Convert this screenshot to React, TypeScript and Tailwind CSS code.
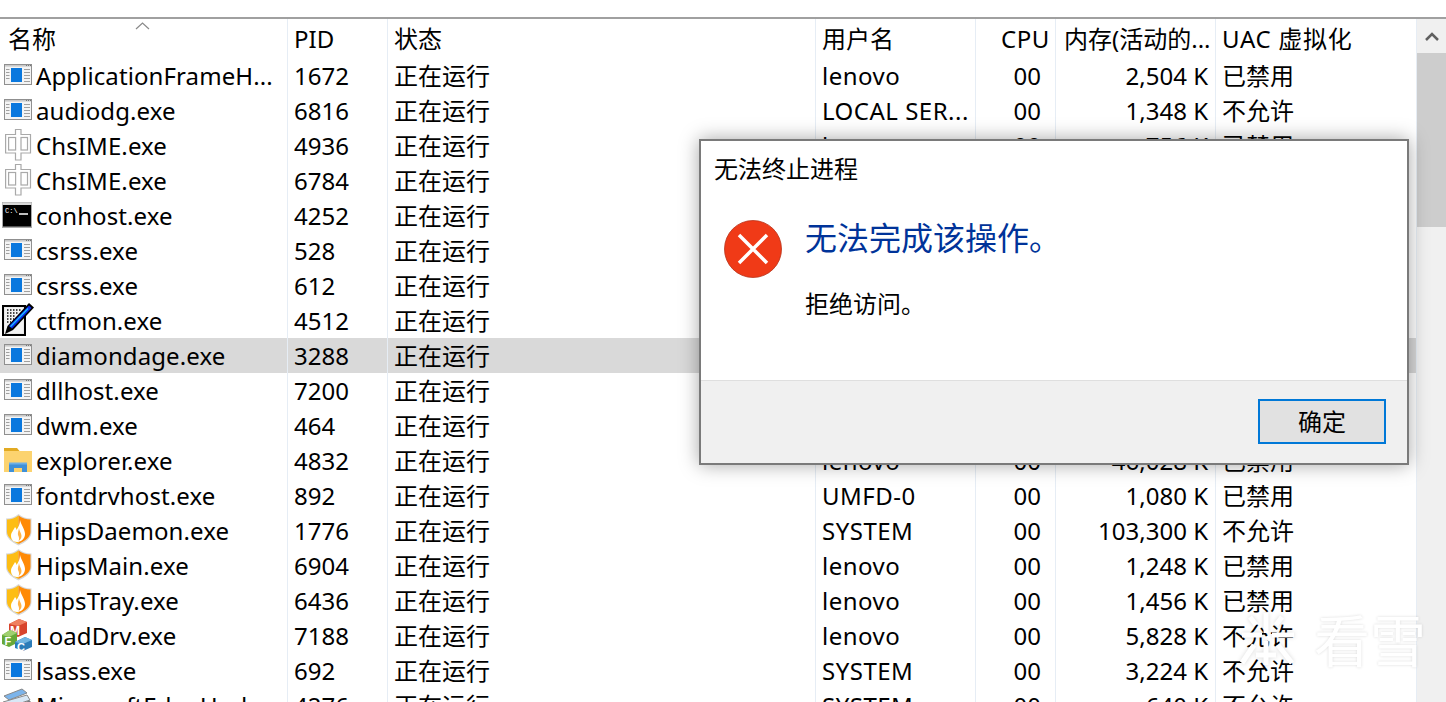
import React from 'react';

type Icon = 'app' | 'ime' | 'console' | 'pen' | 'folder' | 'shield' | 'cubes' | 'edge';

type Proc = {
  icon: Icon;
  name: string;
  pid: string;
  user: string;
  mem: string;
  uac: string;
  active?: boolean;
};

const rows: Proc[] = [
  { icon: 'app', name: 'ApplicationFrameH...', pid: '1672', user: 'lenovo', mem: '2,504 K', uac: '已禁用' },
  { icon: 'app', name: 'audiodg.exe', pid: '6816', user: 'LOCAL SER...', mem: '1,348 K', uac: '不允许' },
  { icon: 'ime', name: 'ChsIME.exe', pid: '4936', user: 'lenovo', mem: '756 K', uac: '已禁用' },
  { icon: 'ime', name: 'ChsIME.exe', pid: '6784', user: 'lenovo', mem: '748 K', uac: '已禁用' },
  { icon: 'console', name: 'conhost.exe', pid: '4252', user: 'lenovo', mem: '1,120 K', uac: '已禁用' },
  { icon: 'app', name: 'csrss.exe', pid: '528', user: 'SYSTEM', mem: '1,016 K', uac: '不允许' },
  { icon: 'app', name: 'csrss.exe', pid: '612', user: 'SYSTEM', mem: '1,204 K', uac: '不允许' },
  { icon: 'pen', name: 'ctfmon.exe', pid: '4512', user: 'lenovo', mem: '3,180 K', uac: '不允许' },
  { icon: 'app', name: 'diamondage.exe', pid: '3288', user: 'lenovo', mem: '2,260 K', uac: '已禁用', active: true },
  { icon: 'app', name: 'dllhost.exe', pid: '7200', user: 'lenovo', mem: '1,532 K', uac: '已禁用' },
  { icon: 'app', name: 'dwm.exe', pid: '464', user: 'DWM-1', mem: '24,112 K', uac: '已禁用' },
  { icon: 'folder', name: 'explorer.exe', pid: '4832', user: 'lenovo', mem: '46,028 K', uac: '已禁用' },
  { icon: 'app', name: 'fontdrvhost.exe', pid: '892', user: 'UMFD-0', mem: '1,080 K', uac: '已禁用' },
  { icon: 'shield', name: 'HipsDaemon.exe', pid: '1776', user: 'SYSTEM', mem: '103,300 K', uac: '不允许' },
  { icon: 'shield', name: 'HipsMain.exe', pid: '6904', user: 'lenovo', mem: '1,248 K', uac: '已禁用' },
  { icon: 'shield', name: 'HipsTray.exe', pid: '6436', user: 'lenovo', mem: '1,456 K', uac: '已禁用' },
  { icon: 'cubes', name: 'LoadDrv.exe', pid: '7188', user: 'lenovo', mem: '5,828 K', uac: '不允许' },
  { icon: 'app', name: 'lsass.exe', pid: '692', user: 'SYSTEM', mem: '3,224 K', uac: '不允许' },
  { icon: 'edge', name: 'MicrosoftEdgeUpda...', pid: '4276', user: 'SYSTEM', mem: '640 K', uac: '不允许' },
];

const cols = 'grid grid-cols-[288px_100px_428px_160px_80px_160px_201px]';
const line = 'border-r border-[#e6edf5]';

const RowIcon: React.FC<{ type: Icon }> = ({ type }) => {
  return (
    <svg width="36" height="35" viewBox="0 0 36 35" className="shrink-0">
      {type === 'app' && (
        <g>
          <rect x="4.500" y="6.500" width="27" height="20" fill="#f4f4f4" stroke="#8f8f8f" />
          <rect x="5" y="7" width="26" height="1.600" fill="#c9c9c9" />
          <path d="M26 7.500h1M28 7.500h1M30 7.500h1" stroke="#777" />
          <rect x="11" y="10" width="11" height="14" fill="#0a78de" />
          <path d="M6 11.500h3.500M6 14.500h3.500M6 17.500h3.500M6 20.500h3.500M24 11.500h6M24 14.500h6M24 17.500h6M24 20.500h6M24 23.500h6" stroke="#a0a0a0" />
        </g>
      )}
      {type === 'ime' && (
        <g fill="#fff" stroke="#a9a9a9" strokeWidth="1.200">
          <path d="M15.500 1.500h5.500v5h9.500v18.500H21v7h-5.500v-7H5.600V6.500h9.900z" />
          <rect x="8.600" y="9.500" width="7" height="12.500" />
          <rect x="21" y="9.500" width="6.500" height="12.500" />
        </g>
      )}
      {type === 'console' && (
        <g>
          <rect x="2" y="4" width="30" height="26" fill="#a8a8a8" />
          <rect x="2.500" y="4.500" width="29" height="2.500" fill="#d8d8d8" />
          <rect x="3" y="7" width="28" height="21.500" fill="#000" />
          <text x="5" y="15" fill="#fff" fontSize="7" fontFamily="'Liberation Mono', monospace">C:\</text>
          <path d="M19 16h9" stroke="#fff" strokeWidth="1.500" />
        </g>
      )}
      {type === 'pen' && (
        <g>
          <rect x="3" y="3" width="22" height="29" fill="#e8e8e8" stroke="#000" strokeWidth="2" />
          <rect x="5" y="5" width="18" height="25" fill="#f3f3f3" />
          <path d="M7 7h14M7 10h12M7 13h9M7 16h7M7 19h4" stroke="#111" strokeWidth="1.500" strokeDasharray="1.500 1.500" />
          <path d="M29 0l5 4.500L13 27l-8 4 2.500-8z" fill="#000" />
          <path d="M29 2.500l2.500 2.500L12 25.500l-3-2.500z" fill="#0a2ce8" />
          <path d="M27.500 5l1 1L11 24l-1-.8z" fill="#1cc4ff" />
        </g>
      )}
      {type === 'folder' && (
        <g>
          <path d="M4 5h13l3 3.500H4z" fill="#e2aa22" />
          <rect x="4" y="8" width="28" height="21" fill="#fcd36f" />
          <path d="M9 29v-8h18v8h-5v-4h-8v4z" fill="#3f90d8" />
          <path d="M9 19.500h18v2H9z" fill="#6eb0e6" />
        </g>
      )}
      {type === 'shield' && (
        <g>
          <path d="M6 5.500c5 0 9-1.500 12.500-4.500 3.500 3 8 4.500 13 4.500V19c0 6-6 10.500-13 13.500C12 29.500 6 25 6 19z" fill="#d8d8d8" />
          <path d="M7 6.500c4.500 0 8-1.500 11.500-4V31C12.500 28 7 24 7 19z" fill="#fdbd14" />
          <path d="M18.500 2.500C22 5 26 6.500 30.500 6.500V19c0 5-5.500 9-12 12z" fill="#ff8a06" />
          <path d="M20 7c1 5 5 9 5 14 0 4-3 8-8 8-4 0-6-3-6-6 0-4 3-6 4-9 1 1 1.500 2 1.500 3 2-3 3.500-6 3.500-10z" fill="#fff" />
          <path d="M19 15c0 3 2.500 5 2.500 8 0 2.500-1.500 4-3 5 1-2 .5-4-.5-6-.5-1.500.5-4 1-7z" fill="#ffb347" />
        </g>
      )}
      {type === 'cubes' && (
        <g fontFamily="'Liberation Sans', sans-serif" fontWeight="700" fill="#fff">
          <path d="M9 6l10-5 8 3v11l-9 4-9-3z" fill="#d8442c" />
          <path d="M9 6l10-5 8 3-9 4z" fill="#ef8060" />
          <text x="10" y="17" fontSize="12">M</text>
          <path d="M2 17l8-5 7 3v10l-8 4-7-3z" fill="#66a838" />
          <path d="M2 17l8-5 7 3-8 4z" fill="#a0d070" />
          <text x="4.500" y="27" fontSize="11">F</text>
          <path d="M15 24l10-5 7 3v7l-9 4-8-3z" fill="#2c7cb8" />
          <path d="M15 24l10-5 7 3-9 4z" fill="#70b4e0" />
          <text x="17" y="33" fontSize="11">C</text>
        </g>
      )}
      {type === 'edge' && (
        <g>
          <path d="M4 8l18-7 5 4-18 7z" fill="#7cb4ea" stroke="#888" />
          <path d="M3 14l24-7 3 5-24 8z" fill="#d8e8f6" stroke="#888" />
          <path d="M5 20l25-7v8L7 29z" fill="#4a90d8" stroke="#777" />
        </g>
      )}
    </svg>
  );
};

const App: React.FC = () => {
  return (
    <div lang="zh-CN" className="relative h-[702px] w-[1446px] overflow-hidden bg-white text-[24px] text-black [font-family:'Noto_Sans','Noto_Sans_CJK_SC',sans-serif]">
      <div className="h-[17px]" />
      <div className="h-[2px] bg-[#a0a0a0]" />
      <div className="flex">
        <div className="w-[1417px]">
          <div className={`${cols} relative h-[39px] leading-[39px]`}>
            <div className={`${line} pl-[8px]`}>名称</div>
            <div className={`${line} pl-[6px]`}>PID</div>
            <div className={`${line} pl-[6px]`}>状态</div>
            <div className={`${line} pl-[6px]`}>用户名</div>
            <div className={`${line} pr-[5px] text-right tracking-[0.6px]`}>CPU</div>
            <div className={`${line} pl-[8px] whitespace-nowrap`}>内存(活动的...</div>
            <div className={`${line} pl-[6px] tracking-[0.7px]`}>UAC 虚拟化</div>
            <svg width="15" height="8" viewBox="0 0 15 8" className="absolute left-[135px] top-[3px]">
              <path d="M1 7l6.500-6L14 7" fill="none" stroke="#8a8a8a" strokeWidth="1.200" />
            </svg>
          </div>
          {rows.map((r, i) => (
            <div key={i} className={`${cols} h-[35px] leading-[35px] ${r.active ? 'bg-[#d9d9d9]' : ''}`}>
              <div className={`${line} flex whitespace-nowrap tracking-[0.1px]`}>
                <RowIcon type={r.icon} />
                <span>{r.name}</span>
              </div>
              <div className={`${line} pl-[6px]`}>{r.pid}</div>
              <div className={`${line} pl-[6px]`}>正在运行</div>
              <div className={`${line} pl-[6px] whitespace-nowrap tracking-[0.5px]`}>{r.user}</div>
              <div className={`${line} pr-[14px] text-right`}>00</div>
              <div className={`${line} pr-[7px] text-right`}>{r.mem}</div>
              <div className={`${line} pl-[6px]`}>{r.uac}</div>
            </div>
          ))}
        </div>
        <div className="flex h-[683px] w-[29px] flex-col bg-[#f0f0f0]">
          <div className="flex h-[34px] items-center justify-center">
            <svg width="14" height="9" viewBox="0 0 14 9">
              <path d="M1 8l6-6 6 6" fill="none" stroke="#606060" strokeWidth="2.500" />
            </svg>
          </div>
          <div className="h-[174px] bg-[#cdcdcd]" />
        </div>
      </div>

      <div className="absolute left-[699px] top-[139px] flex h-[326px] w-[710px] flex-col border-2 border-[#7a7a7a] bg-white shadow-[0_0_18px_rgba(0,0,0,0.35)]">
        <div className="pl-[13px] pt-[11px] leading-[34px]">无法终止进程</div>
        <div className="flex flex-1 pl-[23px] pt-[34px]">
          <svg width="58" height="58" viewBox="0 0 58 58" className="shrink-0">
            <circle cx="29" cy="29" r="28.500" fill="#f03a17" stroke="#b8331a" strokeWidth="0.800" />
            <path d="M15 15l28 28M43 15L15 43" stroke="#fff" strokeWidth="3.500" />
          </svg>
          <div className="pl-[23px]">
            <div className="mt-[-6px] text-[32px] leading-[48px] text-[#003399]">无法完成该操作。</div>
            <div className="mt-[25px] leading-[34px]">拒绝访问。</div>
          </div>
        </div>
        <div className="flex h-[83px] items-start justify-end border-t border-[#dfdfdf] bg-[#f0f0f0] pr-[21px] pt-[18px]">
          <button className="h-[45px] w-[128px] border-2 border-[#0078d7] bg-[#e1e1e1] leading-[41px]">确定</button>
        </div>
      </div>

      <div className="absolute left-[1236px] top-[610px] flex items-center gap-[14px] text-white [text-shadow:0_0_3px_rgba(0,0,0,0.15)]">
        <svg width="64" height="58" viewBox="0 0 64 58" fill="none" stroke="#fff" strokeWidth="5" className="[filter:drop-shadow(0_0_2px_rgba(0,0,0,0.15))]">
          <path d="M14 6l6 8M30 2v20M46 6l-6 8M6 24h20M36 24h22M18 34L6 52M42 34l14 18M30 30v24M20 44h20" />
        </svg>
        <span className="text-[56px] leading-[60px]">看雪</span>
      </div>
    </div>
  );
};

export default App;
